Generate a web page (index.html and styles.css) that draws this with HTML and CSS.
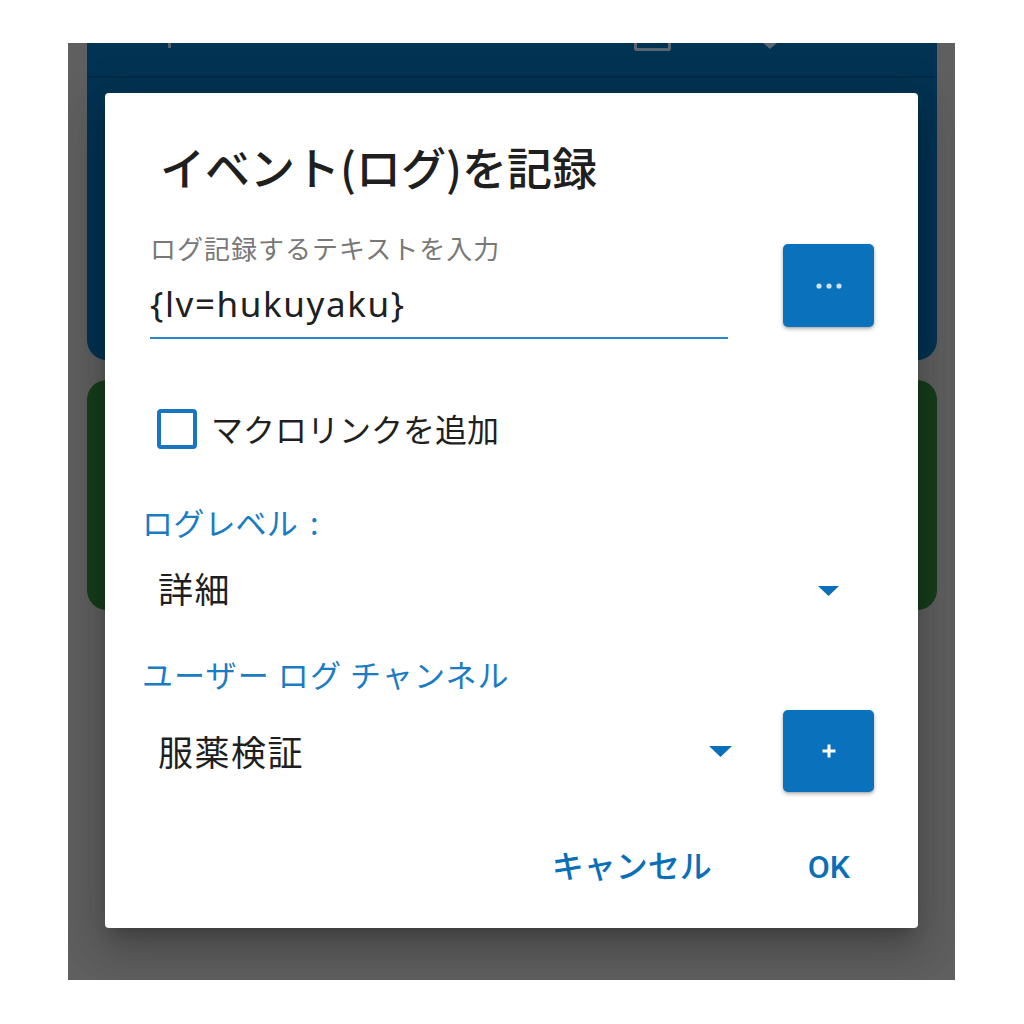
FILE: index.html
```html
<!DOCTYPE html>
<html lang="ja">
<head>
<meta charset="utf-8">
<title>イベント(ログ)を記録</title>
<link rel="stylesheet" href="styles.css">
</head>
<body>
<div class="screen">
  <div class="backdrop">
    <div class="card card-blue">
      <div class="topstrip">
        <span class="ic ic-tick"></span>
        <span class="ic ic-box"></span>
        <span class="ic ic-tri"></span>
      </div>
    </div>
    <div class="card card-green"></div>
  </div>

  <div class="dialog">
    <h1 class="title">イベント(ログ)を記録</h1>

    <div class="input-row">
      <div class="field">
        <div class="field-label">ログ記録するテキストを入力</div>
        <div class="field-value">{lv=hukuyaku}</div>
      </div>
      <div class="square-btn btn-more">
        <svg width="26" height="6" viewBox="0 0 26 6"><circle cx="3" cy="3" r="2.6"/><circle cx="13" cy="3" r="2.6"/><circle cx="23" cy="3" r="2.6"/></svg>
      </div>
    </div>

    <div class="check-row">
      <span class="checkbox"></span>
      <span class="check-text">マクロリンクを追加</span>
    </div>

    <div class="section-label label-level">ログレベル<span class="colon">:</span></div>
    <div class="select-row select-level">
      <span class="select-text">詳細</span>
      <svg class="caret" width="21" height="10" viewBox="0 0 21 10"><polygon points="0,0 21,0 10.5,10"/></svg>
    </div>

    <div class="section-label label-channel">ユーザー ログ チャンネル</div>
    <div class="select-row select-channel">
      <span class="select-text">服薬検証</span>
      <svg class="caret" width="23" height="11" viewBox="0 0 23 11"><polygon points="0,0 23,0 11.5,11"/></svg>
      <div class="square-btn btn-add">
        <svg width="16" height="16" viewBox="0 0 16 16"><path d="M8 1.5v13M1.5 8h13"/></svg>
      </div>
    </div>

    <div class="actions">
      <span class="action">キャンセル</span>
      <span class="action action-ok">OK</span>
    </div>
  </div>
</div>
</body>
</html>
```

FILE: styles.css
```css
* { box-sizing: border-box; }

html, body {
  margin: 0;
  padding: 0;
  background: #ffffff;
}

body {
  font-family: Roboto, "Noto Sans CJK JP", sans-serif;
}

.screen {
  position: relative;
  margin: 43px 0 0 68px;
  width: 887px;
  height: 937px;
  background: #5f5f5f;
  overflow: hidden;
}

.backdrop {
  display: flex;
  flex-direction: column;
  gap: 20px;
  padding: 0 18px 0 19px;
}

.card {
  border-radius: 0 0 20px 20px;
}

.card-blue {
  height: 317px;
  background: #033352;
}

.card-green {
  height: 230px;
  background: #173d1b;
  border-radius: 20px;
}

.topstrip {
  height: 35px;
  border-bottom: 2px solid #022b47;
  display: flex;
  align-items: flex-start;
}

.ic { display: block; }

.ic-tick {
  margin-left: 81px;
  width: 3px;
  height: 5px;
  background: #56636d;
}

.ic-box {
  margin-left: 463px;
  width: 37px;
  height: 8px;
  border: 3px solid #5a6670;
  border-top: none;
  border-radius: 0 0 3px 3px;
}

.ic-tri {
  margin-left: 92px;
  width: 0;
  height: 0;
  border-left: 7px solid transparent;
  border-right: 7px solid transparent;
  border-top: 6px solid #5a6670;
}

/* Dialog overlays the dimmed screen */
.dialog {
  position: absolute;
  left: 37px;
  top: 50px;
  width: 813px;
  height: 835px;
  background: #ffffff;
  border-radius: 4px;
  box-shadow: 0 11px 15px -7px rgba(0,0,0,0.2), 0 24px 38px 3px rgba(0,0,0,0.14), 0 9px 46px 8px rgba(0,0,0,0.12);
  padding: 46px 44px 0 45px;
  display: flex;
  flex-direction: column;
}

.title {
  margin: 0 0 0 10px;
  font-family: "Noto Sans CJK JP", sans-serif;
  font-size: 45px;
  line-height: 56px;
  font-weight: 500;
  color: #1f1f1f;
}

.input-row {
  margin-top: 37px;
  display: flex;
  align-items: flex-start;
  gap: 55px;
}

.field {
  width: 578px;
  display: flex;
  flex-direction: column;
}

.field-label {
  font-family: "Noto Sans CJK JP", sans-serif;
  font-size: 26px;
  line-height: 32px;
  color: #787878;
  letter-spacing: 1px;
}

.field-value {
  margin-top: 19px;
  font-family: "Noto Sans", sans-serif;
  font-size: 35px;
  line-height: 42px;
  letter-spacing: 1.6px;
  color: #202020;
  padding-bottom: 12px;
  border-bottom: 2px solid #2a86cc;
}

.square-btn {
  width: 91px;
  height: 82px;
  border-radius: 5px;
  background: #0a72bc;
  box-shadow: 0 2px 4px rgba(0,0,0,0.28), 0 1px 2px rgba(0,0,0,0.12);
  display: flex;
  align-items: center;
  justify-content: center;
  flex: none;
}

.btn-more {
  margin-top: 12px;
  height: 83px;
}

.btn-more svg circle { fill: #cfe2f2; }

.btn-add svg path {
  stroke: #ffffff;
  stroke-width: 3;
  fill: none;
}

.check-row {
  margin-top: 70px;
  margin-left: 7px;
  display: flex;
  align-items: center;
  gap: 14px;
  height: 40px;
}

.checkbox {
  width: 40px;
  height: 40px;
  border: 4px solid #1776bf;
  border-radius: 4px;
  flex: none;
}

.check-text {
  font-family: "Noto Sans CJK JP", sans-serif;
  font-size: 32px;
  line-height: 40px;
  color: #1f1f1f;
  margin-top: -3px;
}

.section-label {
  font-family: "Noto Sans CJK JP", sans-serif;
  font-size: 31px;
  line-height: 36px;
  color: #1a7cc3;
  margin-left: -8px;
  letter-spacing: 0.2px;
}

.label-level { margin-top: 55px; }

.colon { margin-left: 12px; }

.label-channel {
  margin-top: 46px;
  letter-spacing: 1.1px;
}

.select-row {
  display: flex;
  align-items: center;
  margin-left: 8px;
}

.select-text {
  font-family: "Noto Sans CJK JP", sans-serif;
  font-size: 35px;
  line-height: 44px;
  letter-spacing: 1.5px;
  color: #1f1f1f;
  flex: 1;
}

.caret polygon { fill: #0a6fb8; }

.select-level {
  margin-top: 26px;
  height: 44px;
  padding-right: 35px;
}

.select-level .caret { margin-top: 6px; }

.select-channel {
  margin-top: 18px;
  height: 82px;
}

.select-channel .caret { margin-right: 51px; }

.actions {
  margin-top: 55px;
  display: flex;
  justify-content: flex-end;
  gap: 96px;
  padding-right: 24px;
}

.action {
  font-family: Roboto, "Noto Sans CJK JP", sans-serif;
  font-size: 32px;
  line-height: 40px;
  font-weight: 500;
  color: #0a6fb6;
}
```
